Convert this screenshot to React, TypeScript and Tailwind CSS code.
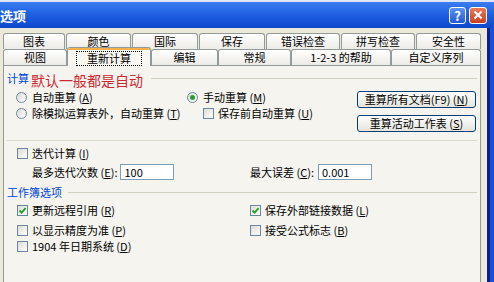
import React from "react";

const font = "font-['Noto_Sans_CJK_SC','Noto_Sans',sans-serif]";

function Key({ k }: { k: string }) {
  return (
    <>
      (<span className="underline underline-offset-[1px]">{k}</span>)
    </>
  );
}

function Box({ checked }: { checked?: boolean }) {
  return (
    <span className="flex h-[11px] w-[11px] shrink-0 items-center justify-center border border-[#6b87a6] bg-gradient-to-br from-[#dedcd4] to-white">
      {checked && (
        <svg width="9" height="9" viewBox="0 0 9 9">
          <path d="M1.5 4.5 L3.6 6.6 L7.6 2.2" fill="none" stroke="#21a121" strokeWidth="1.8" />
        </svg>
      )}
    </span>
  );
}

function Radio({ on }: { on?: boolean }) {
  return (
    <span className="flex h-[11px] w-[11px] shrink-0 items-center justify-center rounded-full border border-[#6b87a6] bg-gradient-to-br from-[#dedcd4] to-white">
      {on && <span className="h-[5px] w-[5px] rounded-full bg-[#2aa12a]" />}
    </span>
  );
}

function Check({ checked, children }: { checked?: boolean; children: React.ReactNode }) {
  return (
    <div className="flex h-4 items-center gap-[4px]">
      <Box checked={checked} />
      <span className="whitespace-nowrap">{children}</span>
    </div>
  );
}

function Option({ on, children }: { on?: boolean; children: React.ReactNode }) {
  return (
    <div className="flex h-4 items-center gap-[5px]">
      <Radio on={on} />
      <span className="whitespace-nowrap">{children}</span>
    </div>
  );
}

const tabCls =
  "flex h-4 items-center justify-center rounded-t-[3px] border border-b-0 border-[#919b9c] bg-gradient-to-b from-white to-[#ecebe6] text-[11px] leading-none";

const backTabs = [
  { label: "图表", w: "w-[62px] mr-px" },
  { label: "颜色", w: "w-[65px] mr-px" },
  { label: "国际", w: "w-[66px] mr-px" },
  { label: "保存", w: "w-[66px] mr-px" },
  { label: "错误检查", w: "w-[74px] mr-px" },
  { label: "拼写检查", w: "w-[74px] mr-px" },
  { label: "安全性", w: "w-[65px]" },
];

function Btn({ children }: { children: React.ReactNode }) {
  return (
    <div className="flex h-[17px] w-[119px] items-center justify-center rounded-[3px] border border-[#003c74] bg-gradient-to-b from-white to-[#e4e3dc] whitespace-nowrap">
      {children}
    </div>
  );
}

function Field({ value }: { value: string }) {
  return (
    <div className="flex h-4 w-[54px] items-center border border-[#7f9db9] bg-white pl-[3px]">{value}</div>
  );
}

export default function App() {
  return (
    <div className={`flex h-[282px] w-[494px] flex-col overflow-hidden bg-[#ece9d8] text-[11px] leading-none text-black ${font}`}>
      {/* title bar */}
      <div className="flex h-[28px] shrink-0 items-center border-t-2 border-[#dfe6f3] bg-gradient-to-b from-[#3a7cf2] via-[#1f5fe0] to-[#0c47cc] pr-[7px]">
        <span className="text-[13px] font-bold text-white">选项</span>
        <div className="ml-auto flex items-center gap-[3px]">
          <div className="flex h-[17px] w-[17px] items-center justify-center rounded-[3px] border border-white bg-gradient-to-b from-[#5c93f5] to-[#2457d6] text-[13px] font-bold text-white">
            ?
          </div>
          <div className="flex h-[17px] w-[18px] items-center justify-center rounded-[3px] border border-white bg-gradient-to-b from-[#e9795a] to-[#c8401c]">
            <svg width="10" height="10" viewBox="0 0 10 10">
              <path d="M1.5 1.5 L8.5 8.5 M8.5 1.5 L1.5 8.5" stroke="white" strokeWidth="2" />
            </svg>
          </div>
        </div>
      </div>

      <div className="flex min-h-0 flex-1">
        <div className="flex w-[487px] flex-col pt-[5px]">
          {/* tabs */}
          <div className="ml-[3px] flex h-4">
            {backTabs.map((t) => (
              <div key={t.label} className={`${tabCls} ${t.w}`}>
                {t.label}
              </div>
            ))}
          </div>
          <div className="ml-[3px] flex h-4 items-end">
            <div className={`${tabCls} w-[64px]`}>视图</div>
            <div className="relative z-10 -mb-px flex h-[19px] w-[84px] flex-col rounded-t-[3px] border border-b-0 border-[#919b9c] bg-[#f8f7f2]">
              <div className="h-[2px] rounded-t-[2px] bg-[#f5b04a]" />
              <div className="flex flex-1 items-center justify-center">
                <span className="border border-dotted border-black px-[10px] py-px">重新计算</span>
              </div>
            </div>
            <div className={`${tabCls} w-[67px]`}>编辑</div>
            <div className={`${tabCls} w-[73px]`}>常规</div>
            <div className={`${tabCls} w-[100px]`}>1-2-3 的帮助</div>
            <div className={`${tabCls} w-[90px]`}>自定义序列</div>
          </div>

          {/* panel */}
          <div className="ml-[3px] flex w-[478px] flex-1 flex-col border border-b-0 border-[#919b9c] bg-[#f5f4ef]">
            <div className="mt-[4px] flex h-4 items-center pl-[3px]">
              <span className="text-[#0046d5]">计算</span>
              <span className="ml-[2px] mt-[3px] text-[14px] text-[#d0282e]">默认一般都是自动</span>
              <div className="ml-2 mr-[3px] h-px flex-1 bg-[#d0d0bf]" />
            </div>

            <div className="mt-[3px] flex pl-[12px]">
              <div className="flex w-[171px] flex-col">
                <Option>
                  自动重算 <Key k="A" />
                </Option>
                <Option>
                  除模拟运算表外，自动重算 <Key k="T" />
                </Option>
              </div>
              <div className="flex w-[170px] flex-col">
                <Option on>
                  手动重算 <Key k="M" />
                </Option>
                <div className="pl-[16px]">
                  <Check>
                    保存前自动重算 <Key k="U" />
                  </Check>
                </div>
              </div>
              <div className="mt-[2px] flex flex-col gap-[7px]">
                <Btn>
                  重算所有文档(F9) <Key k="N" />
                </Btn>
                <Btn>
                  重算活动工作表 <Key k="S" />
                </Btn>
              </div>
            </div>

            <div className="mx-[3px] mt-[8px] h-px bg-[#dcdacb]" />

            <div className="mt-[4px] pl-[13px]">
              <Check>
                迭代计算 <Key k="I" />
              </Check>
            </div>

            <div className="mt-[3px] flex items-center pl-[28px]">
              <div className="flex w-[218px] items-center">
                <span className="whitespace-nowrap">
                  最多迭代次数 <Key k="E" />:
                </span>
                <div className="ml-[3px]">
                  <Field value="100" />
                </div>
              </div>
              <span className="whitespace-nowrap">
                最大误差 <Key k="C" />:
              </span>
              <div className="ml-[4px]">
                <Field value="0.001" />
              </div>
            </div>

            <div className="mt-[4px] flex h-4 items-center pl-[3px]">
              <span className="text-[#0046d5]">工作簿选项</span>
              <div className="ml-[6px] mr-[3px] h-px flex-1 bg-[#d0d0bf]" />
            </div>

            <div className="mt-[2px] flex pl-[13px]">
              <div className="flex w-[233px] flex-col">
                <Check checked>
                  更新远程引用 <Key k="R" />
                </Check>
                <div className="mt-[4px]">
                  <Check>
                    以显示精度为准 <Key k="P" />
                  </Check>
                </div>
                <Check>
                  1904 年日期系统 <Key k="D" />
                </Check>
              </div>
              <div className="flex flex-col">
                <Check checked>
                  保存外部链接数据 <Key k="L" />
                </Check>
                <div className="mt-[4px]">
                  <Check>
                    接受公式标志 <Key k="B" />
                  </Check>
                </div>
              </div>
            </div>
          </div>
        </div>
        <div className="w-[7px] border-l-[3px] border-[#0a2290] bg-[#1d4fd6]" />
      </div>
    </div>
  );
}
